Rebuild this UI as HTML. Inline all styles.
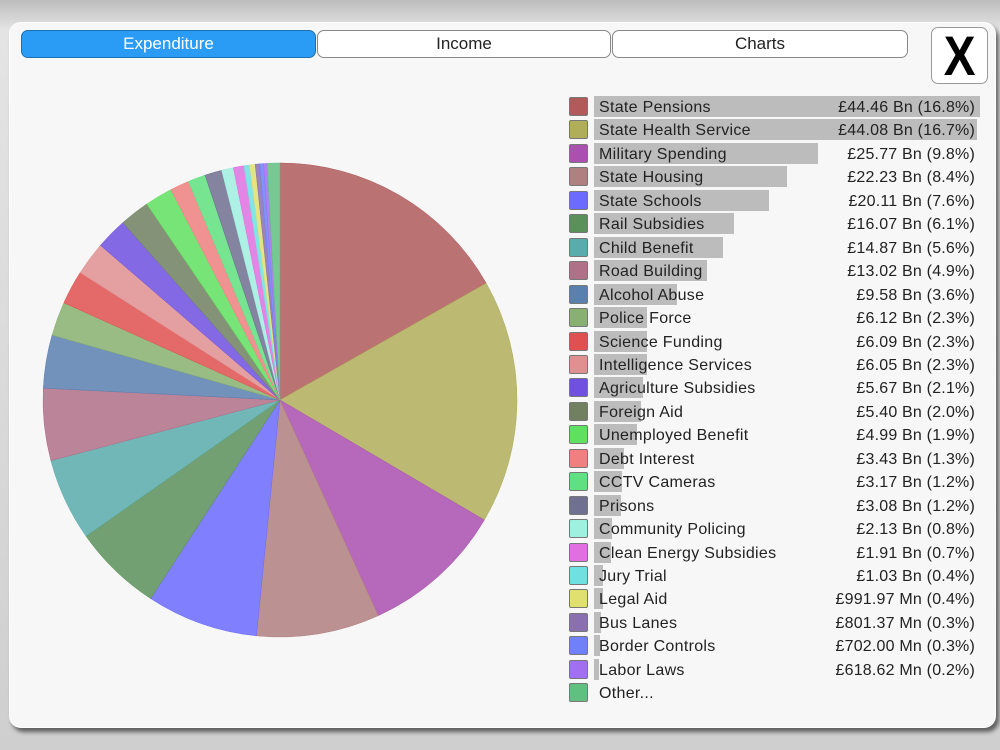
<!DOCTYPE html>
<html><head><meta charset="utf-8"><style>
*{margin:0;padding:0;box-sizing:border-box}
body{width:1000px;height:750px;overflow:hidden;background:#d8d8d8;font-family:"Liberation Sans",sans-serif;position:relative}
.bg{position:absolute;inset:0;background:linear-gradient(#bdbdbd 0,#e4e4e4 30px,#cfcfcf 100%)}
.panel{position:absolute;left:9px;top:22px;width:987px;height:706px;background:#f7f7f7;border-radius:12px;border:1px solid #fff;box-shadow:3px 4px 4px rgba(0,0,0,.55)}
.tab{position:absolute;top:30px;height:28px;border:1px solid #888;border-radius:7px;background:#fff;text-align:center;font-size:17px;line-height:26px;color:#222}
.tab.on{background:#2b9cf5;color:#fff;border-color:#1c6fb0}
.x{position:absolute;left:931px;top:27px;width:57px;height:57px;border:1px solid #999;border-radius:7px;background:#fff;font:bold 56px/56px "Liberation Sans",sans-serif;text-align:center;color:#000;transform-origin:center;}
.x span{display:inline-block;transform:scaleX(.85)}
.row{position:absolute;left:569px;height:22px;width:412px;font-size:16px;color:#222}
.sw{position:absolute;left:0;top:2px;width:19px;height:19px;border:1px solid #777;border-radius:2px}
.bar{position:absolute;left:25px;top:1px;height:21px;background:#bcbcbc}
.lb{position:absolute;left:30px;top:4px;white-space:nowrap;letter-spacing:.3px}
.vl{position:absolute;right:6px;top:4px;white-space:nowrap;letter-spacing:.2px}
</style></head><body>
<div class="bg"></div>
<div class="panel"></div>
<div class="tab on" style="left:21px;width:295px">Expenditure</div>
<div class="tab" style="left:317px;width:294px">Income</div>
<div class="tab" style="left:612px;width:296px">Charts</div>
<div class="x"><span>X</span></div>
<svg id="pie" width="1000" height="750" style="position:absolute;left:0;top:0"></svg>
<div id="leg"></div>
<script>
var d=[["State Pensions","£44.46 Bn (16.8%)",44.46,"#b05a5a"],
["State Health Service","£44.08 Bn (16.7%)",44.08,"#b0ae5a"],
["Military Spending","£25.77 Bn (9.8%)",25.77,"#aa50b0"],
["State Housing","£22.23 Bn (8.4%)",22.23,"#b07f7f"],
["State Schools","£20.11 Bn (7.6%)",20.11,"#6b6bff"],
["Rail Subsidies","£16.07 Bn (6.1%)",16.07,"#5a905a"],
["Child Benefit","£14.87 Bn (5.6%)",14.87,"#5aabab"],
["Road Building","£13.02 Bn (4.9%)",13.02,"#b07088"],
["Alcohol Abuse","£9.58 Bn (3.6%)",9.58,"#5a80b0"],
["Police Force","£6.12 Bn (2.3%)",6.12,"#88b070"],
["Science Funding","£6.09 Bn (2.3%)",6.09,"#e05050"],
["Intelligence Services","£6.05 Bn (2.3%)",6.05,"#e09090"],
["Agriculture Subsidies","£5.67 Bn (2.1%)",5.67,"#7050e0"],
["Foreign Aid","£5.40 Bn (2.0%)",5.40,"#708060"],
["Unemployed Benefit","£4.99 Bn (1.9%)",4.99,"#60e060"],
["Debt Interest","£3.43 Bn (1.3%)",3.43,"#f08080"],
["CCTV Cameras","£3.17 Bn (1.2%)",3.17,"#60e080"],
["Prisons","£3.08 Bn (1.2%)",3.08,"#707090"],
["Community Policing","£2.13 Bn (0.8%)",2.13,"#a0f0e0"],
["Clean Energy Subsidies","£1.91 Bn (0.7%)",1.91,"#e070e0"],
["Jury Trial","£1.03 Bn (0.4%)",1.03,"#70e0e0"],
["Legal Aid","£991.97 Mn (0.4%)",0.99,"#e0e070"],
["Bus Lanes","£801.37 Mn (0.3%)",0.80,"#8a70b0"],
["Border Controls","£702.00 Mn (0.3%)",0.70,"#7080f8"],
["Labor Laws","£618.62 Mn (0.2%)",0.62,"#a070f0"],
["Other...","",2.3,"#60c080"]];
var tot=0;d.forEach(function(r){tot+=r[2]});
var cx=280,cy=400,R=237,a=0,s="";
d.forEach(function(r){var b=a+r[2]/tot*2*Math.PI;
var x1=cx+R*Math.sin(a),y1=cy-R*Math.cos(a),x2=cx+R*Math.sin(b),y2=cy-R*Math.cos(b);
s+='<path d="M'+cx+','+cy+'L'+x1+','+y1+'A'+R+','+R+' 0 '+((b-a)>Math.PI?1:0)+' 1 '+x2+','+y2+'Z" fill="'+r[3]+'" fill-opacity="0.85" stroke="'+r[3]+'" stroke-width="0.5"/>';a=b;});
document.getElementById('pie').innerHTML=s;
var h="";
d.forEach(function(r,i){var y=95+i*23.45;var w=r[1]?Math.max(4,386*r[2]/44.46):0;
h+='<div class="row" style="top:'+y+'px"><div class="sw" style="background:'+r[3]+'"></div>'+(w?'<div class="bar" style="width:'+w+'px"></div>':'')+'<div class="lb">'+r[0]+'</div><div class="vl">'+r[1]+'</div></div>';});
document.getElementById('leg').innerHTML=h;
</script>
</body></html>
